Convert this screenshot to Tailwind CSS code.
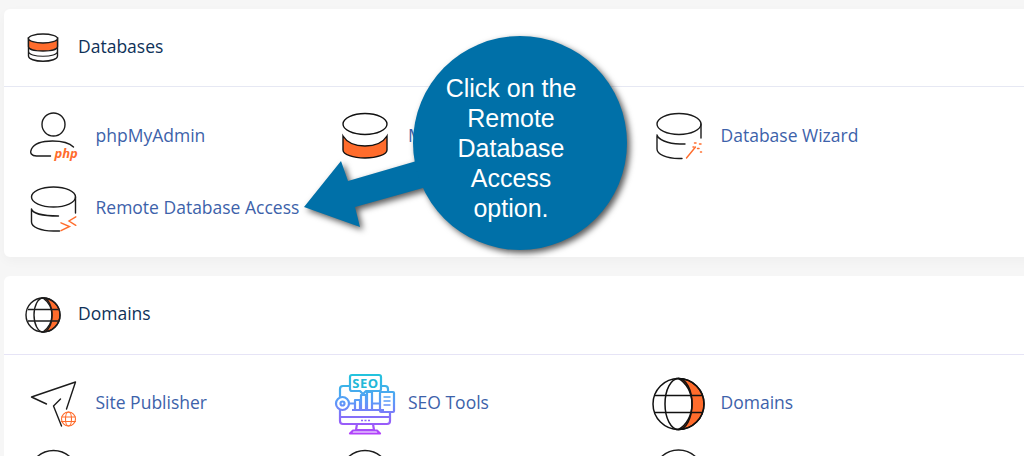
<!doctype html>
<html lang="en">
<head>
<meta charset="utf-8">
<title>cPanel Databases and Domains</title>
<script src="https://cdn.jsdelivr.net/npm/@tailwindcss/browser@4"></script>
</head>
<body class="bg-[#f6f6f6] font-['Open_Sans',sans-serif]">
<div class="relative h-[456px] w-[1024px] overflow-hidden">
  <main class="flex w-[1060px] flex-col gap-[19px] pl-[4px] pt-[9px]">

    <section class="rounded-l-[6px] bg-white shadow-[0_4px_12px_rgba(0,0,0,0.03)]">
      <header class="flex h-[78px] items-center border-b border-[#e6e8f3]">
        <svg class="h-[77px] w-[74px] shrink-0" viewBox="4 9 74 77" fill="none" stroke="#1c1c1c" stroke-width="1.400">
          <path d="M28.500 38v18c0 3 6.500 5.200 14.500 5.200s14.500-2.200 14.500-5.200V38z" fill="#fff"/>
          <path d="M28.500 38v8.500c0 2.800 6.500 4.500 14.500 4.500s14.500-1.700 14.500-4.500V38z" fill="#ff6c2c"/>
          <path d="M28.500 51.500c0 2.800 6.500 4.700 14.500 4.700s14.500-1.900 14.500-4.700" stroke-width="1.100"/>
          <ellipse cx="43" cy="38.500" rx="14.500" ry="4.500" fill="#fff"/>
        </svg>
        <h2 class="mb-[2px] text-[17.5px] text-[#0e3158]">Databases</h2>
      </header>
      <div class="grid grid-cols-[repeat(3,312.5px)] pb-[14px] pl-[15.5px] pt-[12px] text-[17.5px] text-[#3d62aa]">
        <a class="flex h-[72px] items-center">
          <svg class="h-[72px] w-[76px] shrink-0" viewBox="19.500 99 76 72" fill="none" stroke="#1c1c1c" stroke-width="1.400" stroke-linecap="round">
            <circle cx="53" cy="124.500" r="11.500"/>
            <path d="M50 156H36c-5 0-7-3-5-7 3-6 12-8 21-8 9 0 17 2 21 6"/>
            <text x="54" y="157.500" fill="#ff6c2c" stroke="none" font-family="'Open Sans',sans-serif" font-size="13" font-weight="700" font-style="italic">php</text>
          </svg>
          phpMyAdmin
        </a>
        <a class="flex h-[72px] items-center">
          <svg class="h-[72px] w-[76px] shrink-0" viewBox="332 99 76 72" fill="none" stroke="#111" stroke-width="1.400">
            <path d="M343 136v14c0 4.500 10 8 22 8s22-3.500 22-8v-14c-4 6.500-12 10-22 10s-18-3.500-22-10z" fill="#ff6c2c"/>
            <ellipse cx="365" cy="124" rx="22" ry="10.500" fill="#fff"/>
          </svg>
          MySQL® Databases
        </a>
        <a class="flex h-[72px] items-center">
          <svg class="h-[72px] w-[76px] shrink-0" viewBox="644.500 99 76 72" fill="none" stroke="#1c1c1c" stroke-width="1.400" stroke-linecap="round">
            <ellipse cx="678.500" cy="124" rx="22" ry="10.500"/>
            <path d="M656.500 136v13c0 5 9 9.500 22 9.500h3M656.500 135c1 4 10 9 23 9h5M700.500 124v14"/>
            <path d="M686 158l9-11" stroke="#ff6c2c"/>
            <path d="M694 143h1.500M699 144h1.500M697 148.500h1.500M700 152h1M692.500 147h1" stroke="#ff6c2c" stroke-width="1.500"/>
          </svg>
          Database Wizard
        </a>
        <a class="flex h-[72px] items-center">
          <svg class="h-[72px] w-[76px] shrink-0" viewBox="19.500 171 76 72" fill="none" stroke="#1c1c1c" stroke-width="1.400" stroke-linecap="round">
            <ellipse cx="53" cy="197" rx="22" ry="10"/>
            <path d="M31 209v13c0 5 9 9 22 9h6M31 209c1 4 10 7 27 7M75 197v16"/>
            <path d="M60.500 222.800l8.500 3.700-8.500 4.200M75.300 216.800l-6.800 4.200 6.800 4.300" stroke="#ff6c2c"/>
          </svg>
          Remote Database Access
        </a>
      </div>
    </section>

    <section class="rounded-l-[6px] bg-white">
      <header class="flex h-[79px] items-center border-b border-[#e6e4f6]">
        <svg class="h-[78px] w-[74px] shrink-0" viewBox="4 276 74 78" fill="none" stroke="#1c1c1c" stroke-width="1.400">
          <path d="M43 298a17 17 0 0 1 0 34c5.500-4 9-10 9-17s-3.500-13-9-17z" fill="#ff6c2c"/>
          <circle cx="43" cy="315" r="17"/>
          <ellipse cx="43" cy="315" rx="9" ry="17"/>
          <path d="M28 309.500h30M28 321h30"/>
        </svg>
        <h2 class="mb-[4px] text-[17.5px] text-[#0e3158]">Domains</h2>
      </header>
      <div class="grid grid-cols-[repeat(3,312.5px)] pl-[15.5px] pt-[11px] text-[17.5px] text-[#3d62aa]">
        <a class="flex h-[72px] items-center">
          <svg class="h-[72px] w-[76px] shrink-0" viewBox="19.500 365 76 72" fill="none" stroke="#1c1c1c" stroke-width="1.400" stroke-linecap="round" stroke-linejoin="round">
            <path d="M46 403l-15-7 44-15-9 27M61 425l-8-20 7-7"/>
            <g stroke="#ff6c2c" stroke-width="1.100">
              <circle cx="68" cy="418" r="7"/>
              <ellipse cx="68" cy="418" rx="3" ry="7"/>
              <path d="M61 416h14M61 420.500h14"/>
            </g>
          </svg>
          Site Publisher
        </a>
        <a class="flex h-[72px] items-center">
          <svg class="h-[72px] w-[76px] shrink-0" viewBox="332 365 76 72" fill="none" stroke-width="2.200" stroke-linejoin="round">
            <defs>
              <linearGradient id="g" gradientUnits="userSpaceOnUse" x1="365" y1="373" x2="365" y2="433">
                <stop offset="0" stop-color="#22c4dc"/>
                <stop offset=".45" stop-color="#5a9cf8"/>
                <stop offset="1" stop-color="#b340fa"/>
              </linearGradient>
            </defs>
            <g stroke="url(#g)">
              <path d="M352 374h27a2 2 0 0 1 2 2v12a2 2 0 0 1-2 2h-13l-3 3-3-3h-8a2 2 0 0 1-2-2v-12a2 2 0 0 1 2-2z"/>
              <path d="M350 385h-7a3 3 0 0 0-3 3v8M381 385h4a3 3 0 0 1 3 3v3M340 409v11a3 3 0 0 0 3 3h44a3 3 0 0 0 3-3v-9"/>
              <circle cx="342.500" cy="402.500" r="6.500"/>
              <circle cx="342.500" cy="402.500" r="2" />
              <path d="M349 402.500h6M355 408v-9h5v9M361 408v-14h5v14M367 408v-17h5v17M352 409h32M373 402.500h7"/>
              <rect x="380" y="391" width="14" height="20" rx="1"/>
              <path d="M383.500 396h7M383.500 400h7M383.500 404h7" stroke-width="1.600"/>
              <path d="M340 416h50M357 423l-1 6h18l-1-6M350 432.500l3-3h24l3 3z"/>
              <path d="M361 419.500h2M364.500 419.500h2M368 419.500h2" stroke-width="1.500"/>
            </g>
            <text x="365.500" y="387" text-anchor="middle" fill="#22b8d8" font-family="'Open Sans',sans-serif" font-size="13" font-weight="700" letter-spacing=".6">SEO</text>
          </svg>
          SEO Tools
        </a>
        <a class="flex h-[72px] items-center">
          <svg class="h-[72px] w-[76px] shrink-0" viewBox="644.500 365 76 72" fill="none" stroke="#111" stroke-width="1.500">
            <path d="M678 377.500a25.500 25.500 0 0 1 0 51c8-4.500 13.500-14 13.500-25.500s-5.500-21-13.500-25.500z" fill="#ff6c2c"/>
            <circle cx="678" cy="403" r="25.500"/>
            <ellipse cx="678" cy="403" rx="13.500" ry="25.500"/>
            <path d="M654 394.500h48M654 411.500h48"/>
          </svg>
          Domains
        </a>
        <div class="h-[72px]"><svg class="h-[72px] w-[76px]" viewBox="19.500 437 76 72" fill="none" stroke="#1c1c1c" stroke-width="1.400"><circle cx="53" cy="474" r="24.500"/></svg></div>
        <div class="h-[72px]"><svg class="h-[72px] w-[76px]" viewBox="332 437 76 72" fill="none" stroke="#1c1c1c" stroke-width="1.400"><circle cx="365" cy="474" r="24.500"/></svg></div>
        <div class="h-[72px]"><svg class="h-[72px] w-[76px]" viewBox="644.500 437 76 72" fill="none" stroke="#1c1c1c" stroke-width="1.400"><circle cx="678" cy="474" r="25"/></svg></div>
      </div>
    </section>
  </main>

  <svg class="absolute left-0 top-0 h-[456px] w-[1024px] drop-shadow-[3px_3px_3px_rgba(0,0,0,0.65)]" viewBox="0 0 1024 456" aria-hidden="true">
    <path d="M304 207L341 161 348 181 420 160 430 186 355 207 360 227z" fill="#0070a8"/>
    <circle cx="520" cy="143" r="107" fill="#0070a8"/>
  </svg>
  <p class="absolute left-[411px] top-[73px] w-[200px] text-center font-['Liberation_Sans',sans-serif] text-[25px] leading-[30px] text-white">Click on the<br>Remote<br>Database<br>Access<br>option.</p>
</div>
</body>
</html>
